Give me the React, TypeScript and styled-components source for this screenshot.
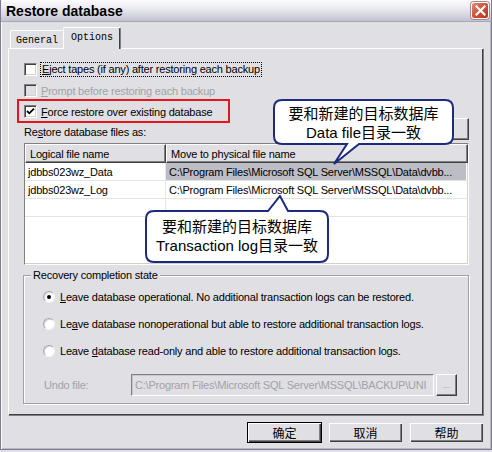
import styled, { createGlobalStyle } from 'styled-components';

const GlobalStyle = createGlobalStyle`
  html, body {
    margin: 0;
    padding: 0;
    width: 492px;
    height: 452px;
    overflow: hidden;
    background: #e0dfe3;
  }
  * {
    box-sizing: border-box;
  }
`;

const rows = [
  { name: 'jdbbs023wz_Data', path: 'C:\\Program Files\\Microsoft SQL Server\\MSSQL\\Data\\dvbb...', selected: true },
  { name: 'jdbbs023wz_Log', path: 'C:\\Program Files\\Microsoft SQL Server\\MSSQL\\Data\\dvbb...', selected: false },
  { name: '', path: '', selected: false },
];

export default function App() {
  return (
    <>
      <GlobalStyle />
      <Window>
        <TitleBar>
          <Title>Restore database</Title>
          <CloseButton>
            <svg width="11" height="11" viewBox="0 0 11 11">
              <path d="M1.5 1.5 L9.5 9.5 M9.5 1.5 L1.5 9.5" stroke="#fff" strokeWidth="2.2" strokeLinecap="square" />
            </svg>
          </CloseButton>
        </TitleBar>

        <Body>
          <TabStrip>
            <Tab>General</Tab>
            <Tab $active>Options</Tab>
          </TabStrip>

          <Panel>
            <CheckRow>
              <CheckBox />
              <FocusText>
                <u>E</u>ject tapes (if any) after restoring each backup
              </FocusText>
            </CheckRow>
            <CheckRow $disabled>
              <CheckBox $disabled />
              <span>
                <u>P</u>rompt before restoring each backup
              </span>
            </CheckRow>
            <CheckRow>
              <Highlight />
              <CheckBox>
                <svg width="9" height="9" viewBox="0 0 9 9">
                  <path d="M1 4 L3.3 6.3 L8 1.6" stroke="#000" strokeWidth="1.8" fill="none" />
                </svg>
              </CheckBox>
              <span>
                <u>F</u>orce restore over existing database
              </span>
            </CheckRow>

            <FilesHeader>
              <FilesLabel>
                Re<u>s</u>tore database files as:
              </FilesLabel>
              <SmallButton />
            </FilesHeader>

            <ListView>
              <ListHeader>
                <HeaderCell $width={141}>Logical file name</HeaderCell>
                <HeaderCell>Move to physical file name</HeaderCell>
              </ListHeader>
              {rows.map((r, i) => (
                <ListRow key={i}>
                  <Cell $width={141}>{r.name}</Cell>
                  <Cell $selected={r.selected}>{r.path}</Cell>
                </ListRow>
              ))}
            </ListView>

            <GroupBox>
              <Legend>Recovery completion state</Legend>
              <RadioRow>
                <Radio $checked />
                <span>
                  <u>L</u>eave database operational. No additional transaction logs can be restored.
                </span>
              </RadioRow>
              <RadioRow>
                <Radio />
                <span>
                  Le<u>a</u>ve database nonoperational but able to restore additional transaction logs.
                </span>
              </RadioRow>
              <RadioRow>
                <Radio />
                <span>
                  Leave <u>d</u>atabase read-only and able to restore additional transaction logs.
                </span>
              </RadioRow>
              <UndoRow>
                <UndoLabel>Undo file:</UndoLabel>
                <UndoInput>C:\Program Files\Microsoft SQL Server\MSSQL\BACKUP\UNI</UndoInput>
                <BrowseButton>...</BrowseButton>
              </UndoRow>
            </GroupBox>
          </Panel>

          <ButtonBar>
            <DialogButton $default>确定</DialogButton>
            <DialogButton>取消</DialogButton>
            <DialogButton>帮助</DialogButton>
          </ButtonBar>
        </Body>

        <Callout $left={272} $top={99} $width={181} $height={66}>
          <svg width="181" height="66" viewBox="0 0 181 66">
            <path
              d="M9 1 H172 Q180 1 180 9 V37 Q180 45 172 45 H86 L61 65 L74 45 H9 Q1 45 1 37 V9 Q1 1 9 1 Z"
              fill="#fff"
              stroke="#1d2a80"
              strokeWidth="2"
            />
          </svg>
          <CalloutText $top={4} $height={40}>
            <span>要和新建的目标数据库</span>
            <span>Data file目录一致</span>
          </CalloutText>
        </Callout>

        <Callout $left={144} $top={195} $width={184} $height={68}>
          <svg width="184" height="68" viewBox="0 0 184 68">
            <path
              d="M9 16 H123 L135 1 L143 16 H175 Q183 16 183 24 V59 Q183 67 175 67 H9 Q1 67 1 59 V24 Q1 16 9 16 Z"
              fill="#fff"
              stroke="#1d2a80"
              strokeWidth="2"
            />
          </svg>
          <CalloutText $top={18} $height={46}>
            <span>要和新建的目标数据库</span>
            <span>Transaction log目录一致</span>
          </CalloutText>
        </Callout>
      </Window>
    </>
  );
}

const Window = styled.div`
  position: relative;
  display: flex;
  flex-direction: column;
  width: 492px;
  height: 450px;
  background: #e0dfe3;
  border: 1px solid #7c7c90;
  border-top: none;
  box-shadow: inset 1px 0 #fff, inset -1px 0 #b8b8c6, inset 0 -1px #b8b8c6;
  font-family: 'Liberation Sans', Arial, sans-serif;
  font-size: 11px;
  letter-spacing: -0.2px;
  color: #000;
`;

const TitleBar = styled.div`
  display: flex;
  align-items: center;
  justify-content: space-between;
  height: 22px;
  padding: 0 2px 0 5px;
  background: linear-gradient(#fcfcfd 0%, #ececf2 35%, #d4d4de 75%, #c2c2d0 100%);
  border-bottom: 1px solid #a6a6b8;
`;

const Title = styled.span`
  font-size: 14px;
  font-weight: bold;
  letter-spacing: 0;
  color: #000;
`;

const CloseButton = styled.div`
  display: flex;
  align-items: center;
  justify-content: center;
  width: 18px;
  height: 17px;
  border: 1px solid #fff;
  border-radius: 3px;
  background: linear-gradient(135deg, #e98a78 0%, #d3543f 45%, #b8321f 100%);
  box-shadow: 0 0 0 1px #a88;
`;

const Body = styled.div`
  display: flex;
  flex-direction: column;
  flex: 1;
  padding: 5px 7px 0 7px;
`;

const TabStrip = styled.div`
  display: flex;
  align-items: flex-end;
  height: 21px;
  padding-left: 2px;
`;

const Tab = styled.div<{ $active?: boolean }>`
  display: flex;
  align-items: center;
  justify-content: center;
  height: ${(p) => (p.$active ? '22px' : '18px')};
  margin-bottom: ${(p) => (p.$active ? '-1px' : '0')};
  padding: ${(p) => (p.$active ? '0 7px 3px' : '2px 5px 0')};
  margin-left: ${(p) => (p.$active ? '-1px' : '0')};
  background: #e0dfe3;
  border-top: 1px solid #fff;
  border-left: 1px solid #fff;
  border-right: 1px solid #808080;
  box-shadow: ${(p) => (p.$active ? 'inset -1px 0 #404040' : 'none')};
  border-radius: 2px 2px 0 0;
  font-family: 'Liberation Mono', 'DejaVu Sans Mono', monospace;
  font-size: 10px;
  letter-spacing: 0;
  position: relative;
  z-index: ${(p) => (p.$active ? 1 : 0)};
`;

const Panel = styled.div`
  position: relative;
  display: flex;
  flex-direction: column;
  height: 368px;
  padding: 10px 14px 0 15px;
  border-top: 1px solid #fff;
  border-left: 1px solid #fff;
  border-right: 1px solid #808080;
  border-bottom: 1px solid #808080;
  box-shadow: inset -1px -1px #404040;
`;

const CheckRow = styled.div<{ $disabled?: boolean }>`
  position: relative;
  display: flex;
  align-items: center;
  gap: 4px;
  height: 21px;
  color: ${(p) => (p.$disabled ? '#a2a2a8' : '#000')};
`;

const CheckBox = styled.div<{ $disabled?: boolean }>`
  display: flex;
  align-items: center;
  justify-content: center;
  width: 13px;
  height: 13px;
  background: ${(p) => (p.$disabled ? '#e0dfe3' : '#fff')};
  border-top: 1px solid #808080;
  border-left: 1px solid #808080;
  border-right: 1px solid #fff;
  border-bottom: 1px solid #fff;
  box-shadow: inset 1px 1px #404040, inset -1px -1px #d4d0c8;
`;

const FocusText = styled.span`
  padding: 0 1px;
  outline: 1px dotted #000;
  outline-offset: 0;
  line-height: 13px;
`;

const Highlight = styled.div`
  position: absolute;
  left: -7px;
  top: -2px;
  width: 213px;
  height: 24px;
  border: 2px solid #e8141c;
  pointer-events: none;
`;

const FilesHeader = styled.div`
  display: flex;
  justify-content: space-between;
  align-items: flex-end;
  height: 22px;
  margin-top: -4px;
`;

const FilesLabel = styled.span`
  padding-bottom: 2px;
`;

const SmallButton = styled.div`
  width: 90px;
  height: 22px;
  background: #e0dfe3;
  border-top: 1px solid #fff;
  border-left: 1px solid #fff;
  border-right: 1px solid #404040;
  border-bottom: 1px solid #404040;
  box-shadow: inset -1px -1px #808080;
`;

const ListView = styled.div`
  display: flex;
  flex-direction: column;
  height: 122px;
  margin-top: 3px;
  background: #fff;
  border-top: 1px solid #808080;
  border-left: 1px solid #808080;
  border-right: 1px solid #fff;
  border-bottom: 1px solid #fff;
  box-shadow: inset -1px -1px #d4d0c8;
`;

const ListHeader = styled.div`
  display: flex;
  height: 19px;
`;

const HeaderCell = styled.div<{ $width?: number }>`
  display: flex;
  align-items: center;
  ${(p) => (p.$width ? `width: ${p.$width}px;` : 'flex: 1;')}
  padding-left: 4px;
  background: #e0dfe3;
  border-top: 1px solid #fff;
  border-left: 1px solid #fff;
  border-right: 1px solid #404040;
  border-bottom: 1px solid #404040;
  box-shadow: inset -1px -1px #808080;
`;

const ListRow = styled.div`
  display: flex;
  height: 18px;
  border-bottom: 1px solid #e4e4e4;
`;

const Cell = styled.div<{ $width?: number; $selected?: boolean }>`
  display: flex;
  align-items: center;
  ${(p) => (p.$width ? `width: ${p.$width}px; border-right: 1px solid #e4e4e4;` : 'flex: 1;')}
  padding-left: 3px;
  margin-right: ${(p) => (p.$selected ? '2px' : '0')};
  background: ${(p) => (p.$selected ? '#bdbdc6' : 'transparent')};
  white-space: nowrap;
  overflow: hidden;
`;

const GroupBox = styled.fieldset`
  display: flex;
  flex-direction: column;
  width: 446px;
  margin: 4px 0 0 -1px;
  padding: 1px 0 7px 19px;
  border: 1px solid #a0a0a8;
  box-shadow: inset 1px 1px #fff, 1px 1px #fff;
`;

const Legend = styled.legend`
  margin-left: -12px;
  padding: 0 2px;
  line-height: 13px;
  background: #e0dfe3;
`;

const RadioRow = styled.div`
  display: flex;
  align-items: center;
  gap: 5px;
  height: 27px;
`;

const Radio = styled.div<{ $checked?: boolean }>`
  position: relative;
  width: 12px;
  height: 12px;
  border-radius: 50%;
  background: #fff;
  border: 1px solid;
  border-color: #a8a8a8 #f4f4f4 #f4f4f4 #a8a8a8;
  box-shadow: inset 1px 1px #d8d8d8;

  &::after {
    content: '';
    display: ${(p) => (p.$checked ? 'block' : 'none')};
    position: absolute;
    left: 3px;
    top: 3px;
    width: 4px;
    height: 4px;
    border-radius: 50%;
    background: #000;
  }
`;

const UndoRow = styled.div`
  display: flex;
  align-items: center;
  height: 22px;
  margin-top: 10px;
`;

const UndoLabel = styled.span`
  width: 88px;
  padding-left: 1px;
  color: #a2a2a8;
`;

const UndoInput = styled.div`
  display: flex;
  align-items: center;
  width: 303px;
  height: 22px;
  padding-left: 3px;
  color: #a2a2a8;
  background: #e0dfe3;
  border-top: 1px solid #808080;
  border-left: 1px solid #808080;
  border-right: 1px solid #fff;
  border-bottom: 1px solid #fff;
  box-shadow: inset 1px 1px #c8c8cc;
  white-space: nowrap;
  overflow: hidden;
`;

const BrowseButton = styled.div`
  display: flex;
  align-items: flex-end;
  justify-content: center;
  width: 21px;
  height: 22px;
  margin-left: 2px;
  padding-bottom: 5px;
  color: #a2a2a8;
  font-size: 9px;
  background: #e0dfe3;
  border-top: 1px solid #fff;
  border-left: 1px solid #fff;
  border-right: 1px solid #404040;
  border-bottom: 1px solid #404040;
  box-shadow: inset -1px -1px #808080;
`;

const ButtonBar = styled.div`
  display: flex;
  justify-content: flex-end;
  gap: 6px;
  margin-top: 6px;
`;

const DialogButton = styled.div<{ $default?: boolean }>`
  display: flex;
  align-items: center;
  justify-content: center;
  width: 75px;
  height: 21px;
  font-family: 'Noto Sans CJK SC', sans-serif;
  font-size: 12px;
  letter-spacing: 0;
  background: #e0dfe3;
  border: 1px solid ${(p) => (p.$default ? '#000' : 'transparent')};
  box-shadow: inset 1px 1px #fff, inset -1px -1px #404040, inset -2px -2px #808080;
`;

const Callout = styled.div<{ $left: number; $top: number; $width: number; $height: number }>`
  position: absolute;
  left: ${(p) => p.$left}px;
  top: ${(p) => p.$top}px;
  width: ${(p) => p.$width}px;
  height: ${(p) => p.$height}px;

  svg {
    display: block;
  }
`;

const CalloutText = styled.div<{ $top: number; $height: number }>`
  position: absolute;
  left: 0;
  right: 0;
  top: ${(p) => p.$top}px;
  height: ${(p) => p.$height}px;
  display: flex;
  flex-direction: column;
  align-items: center;
  justify-content: center;
  font-family: 'Liberation Sans', Arial, 'Noto Sans CJK SC', sans-serif;
  font-size: 15px;
  line-height: 19px;
  letter-spacing: 0;
  color: #000;
`;
